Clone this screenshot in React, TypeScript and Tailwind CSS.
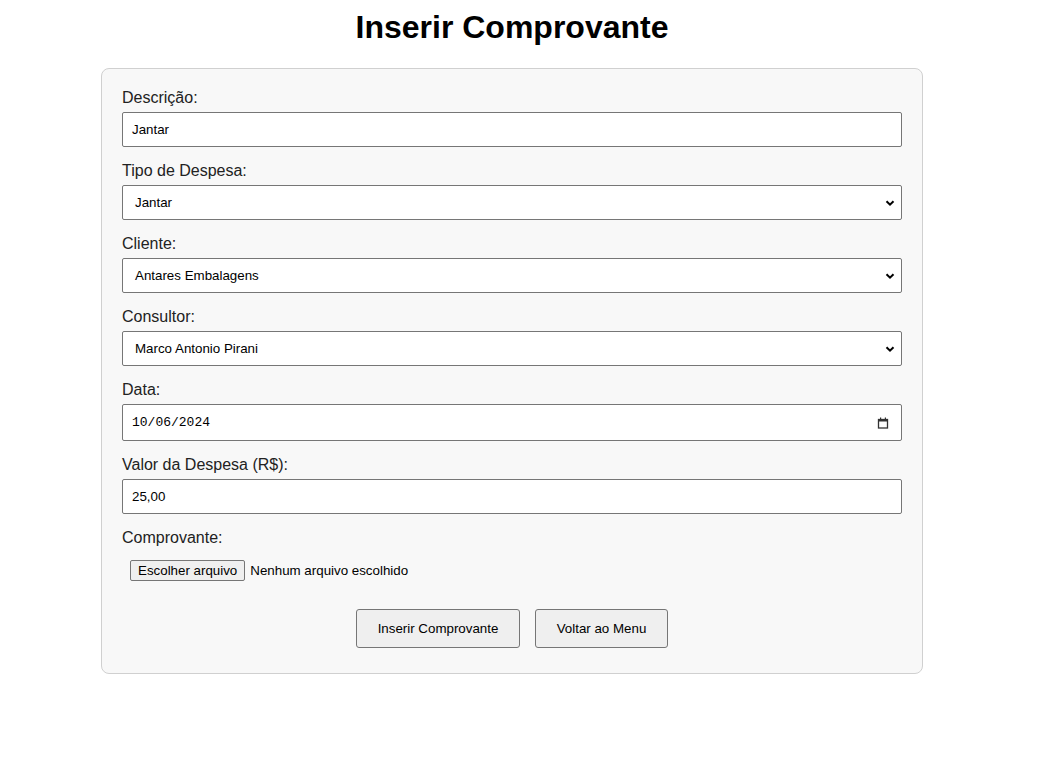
import React from "react";

const F = { fontFamily: '"Liberation Sans", Arial, sans-serif' };

function Label({ children }: { children: React.ReactNode }) {
  return (
    <label className="block text-[16px] leading-[18px] text-[#222] mb-[5px]">
      {children}
    </label>
  );
}

function TextBox({ value, h = 35, mono = false, right }: { value: string; h?: number; mono?: boolean; right?: React.ReactNode }) {
  return (
    <div
      className="relative w-full bg-white border border-[#767676] rounded-[2px] mb-[15px] flex items-center pl-[9px] text-[13.33px] text-black"
      style={{ height: h }}
    >
      <span style={mono ? { fontFamily: '"Liberation Mono", "DejaVu Sans Mono", monospace', fontSize: 13 } : undefined}>{value}</span>
      {right}
    </div>
  );
}

function Chevron() {
  return (
    <svg className="absolute right-[6px] top-1/2 -translate-y-1/2" width="10" height="10" viewBox="0 0 10 10">
      <path d="M1.5 3.2 L5 6.7 L8.5 3.2" fill="none" stroke="#000" strokeWidth="2" />
    </svg>
  );
}

function Cal() {
  return (
    <svg className="absolute right-[12px] top-1/2 -translate-y-1/2" width="12" height="12" viewBox="0 0 12 12">
      <rect x="1.5" y="2.5" width="9" height="8.5" fill="none" stroke="#333" strokeWidth="1.3" />
      <rect x="1.5" y="2" width="9" height="2.5" fill="#333" />
      <rect x="3" y="0.5" width="1.2" height="2" fill="#333" />
      <rect x="7.8" y="0.5" width="1.2" height="2" fill="#333" />
    </svg>
  );
}

function SelectBox({ value }: { value: string }) {
  return (
    <div className="relative w-full h-[35px] bg-white border border-[#767676] rounded-[2px] mb-[15px] flex items-center pl-[12px] text-[13.33px] text-black">
      <span>{value}</span>
      <Chevron />
    </div>
  );
}

export default function App() {
  return (
    <div className="w-[1045px] min-h-[761px] bg-white" style={F}>
      <div className="w-[1024px] pt-[9px]">
        <h1 className="text-center text-[32px] leading-[37px] font-bold text-black mb-[22px]">
          Inserir Comprovante
        </h1>
        <div className="mx-auto w-[822px] bg-[#f8f8f8] border border-[#d0d0d0] rounded-[8px] p-[20px]">
          <Label>Descrição:</Label>
          <TextBox value="Jantar" />
          <Label>Tipo de Despesa:</Label>
          <SelectBox value="Jantar" />
          <Label>Cliente:</Label>
          <SelectBox value="Antares Embalagens" />
          <Label>Consultor:</Label>
          <SelectBox value="Marco Antonio Pirani" />
          <Label>Data:</Label>
          <TextBox value="10/06/2024" h={37} mono right={<Cal />} />
          <Label>Valor da Despesa (R$):</Label>
          <TextBox value="25,00" />
          <Label>Comprovante:</Label>
          <div className="p-[8px] mb-[15px] flex items-center text-[13.33px] text-black h-[37px]">
            <span className="h-[21px] px-[7px] flex items-center bg-[#efefef] border border-[#767676] rounded-[2px] mr-[5px]">
              Escolher arquivo
            </span>
            <span>Nenhum arquivo escolhido</span>
          </div>
          <div className="flex justify-center gap-[15px] pt-[5px] pb-[5px] text-[13.33px] text-black">
            <div className="h-[39px] w-[164px] flex items-center justify-center bg-[#efefef] border border-[#767676] rounded-[3px]">
              Inserir Comprovante
            </div>
            <div className="h-[39px] w-[133px] flex items-center justify-center bg-[#efefef] border border-[#767676] rounded-[3px]">
              Voltar ao Menu
            </div>
          </div>
        </div>
      </div>
    </div>
  );
}
